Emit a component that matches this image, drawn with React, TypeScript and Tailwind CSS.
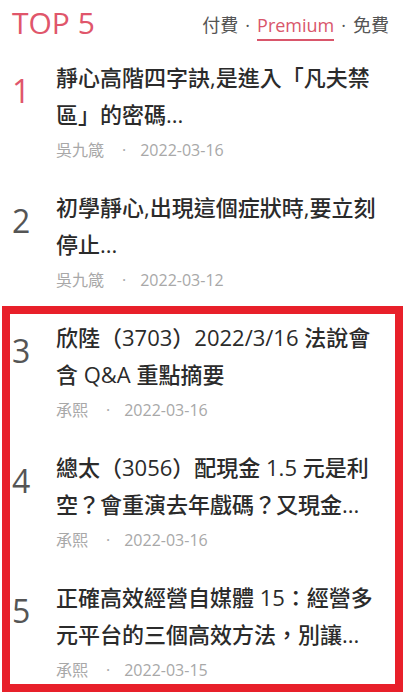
import React from 'react';

// ── Data ─────────────────────────────────────────────────────

interface Article {
  rank: number;
  title: string;
  author: string;
  date: string;
}

const ARTICLES: Article[] = [
  { rank: 1, title: '靜心高階四字訣,是進入「凡夫禁區」的密碼...', author: '吳九箴', date: '2022-03-16' },
  { rank: 2, title: '初學靜心,出現這個症狀時,要立刻停止...', author: '吳九箴', date: '2022-03-12' },
  { rank: 3, title: '欣陸（3703）2022/3/16 法說會含 Q&A 重點摘要', author: '承熙', date: '2022-03-16' },
  { rank: 4, title: '總太（3056）配現金 1.5 元是利空？會重演去年戲碼？又現金...', author: '承熙', date: '2022-03-16' },
  { rank: 5, title: '正確高效經營自媒體 15：經營多元平台的三個高效方法，別讓...', author: '承熙', date: '2022-03-15' },
];

const FONT = "font-['Open_Sans','Noto_Sans_CJK_TC',sans-serif]";

// ── Row ──────────────────────────────────────────────────────

function ArticleRow({ article }: { article: Article }) {
  const first = article.rank === 1;
  return (
    <div className="flex h-[130px] pl-3 pr-[22px]">
      <div
        className={`w-[44px] shrink-0 mt-[13px] text-[32px] leading-[38px] ${
          first ? 'text-[#e0566b]' : 'text-[#555555]'
        }`}
      >
        {article.rank}
      </div>
      <div className="flex-1 min-w-0">
        <h3 className="text-[22px] leading-[37px] text-[#2b2b2b] font-medium line-clamp-2">
          {article.title}
        </h3>
        <div className="mt-[5px] flex items-center text-[16px] leading-[24px] text-[#a8a8a8]">
          <span>{article.author}</span>
          <span className="ml-[18px] mr-[14px]">·</span>
          <span>{article.date}</span>
        </div>
      </div>
    </div>
  );
}

// ── Page ─────────────────────────────────────────────────────

export default function App() {
  return (
    <div lang="zh-Hant-TW" className={`w-[408px] h-[697px] bg-white overflow-hidden ${FONT}`}>
      {/* Header */}
      <div className="flex items-start justify-between pl-3 pr-[19px] pt-[3px]">
        <h2 className="text-[30px] leading-[40px] text-[#e0566b]">TOP 5</h2>
        <div className="mt-[10px] flex items-start text-[18px] leading-[24px] text-[#555555]">
          <span>付費</span>
          <span className="mx-[7px]">·</span>
          <span className="text-[#d9566b] border-b-2 border-[#d9566b] pb-[2px]">Premium</span>
          <span className="mx-[7px]">·</span>
          <span>免費</span>
        </div>
      </div>

      {/* List */}
      <div className="relative mt-[16px]">
        {ARTICLES.map((a) => (
          <ArticleRow key={a.rank} article={a} />
        ))}

        {/* Highlight box over ranks 3–5 */}
        <div className="pointer-events-none absolute left-[2px] top-[247px] w-[401px] h-[386px] border-[8px] border-[#e8202a]" />
      </div>
    </div>
  );
}
